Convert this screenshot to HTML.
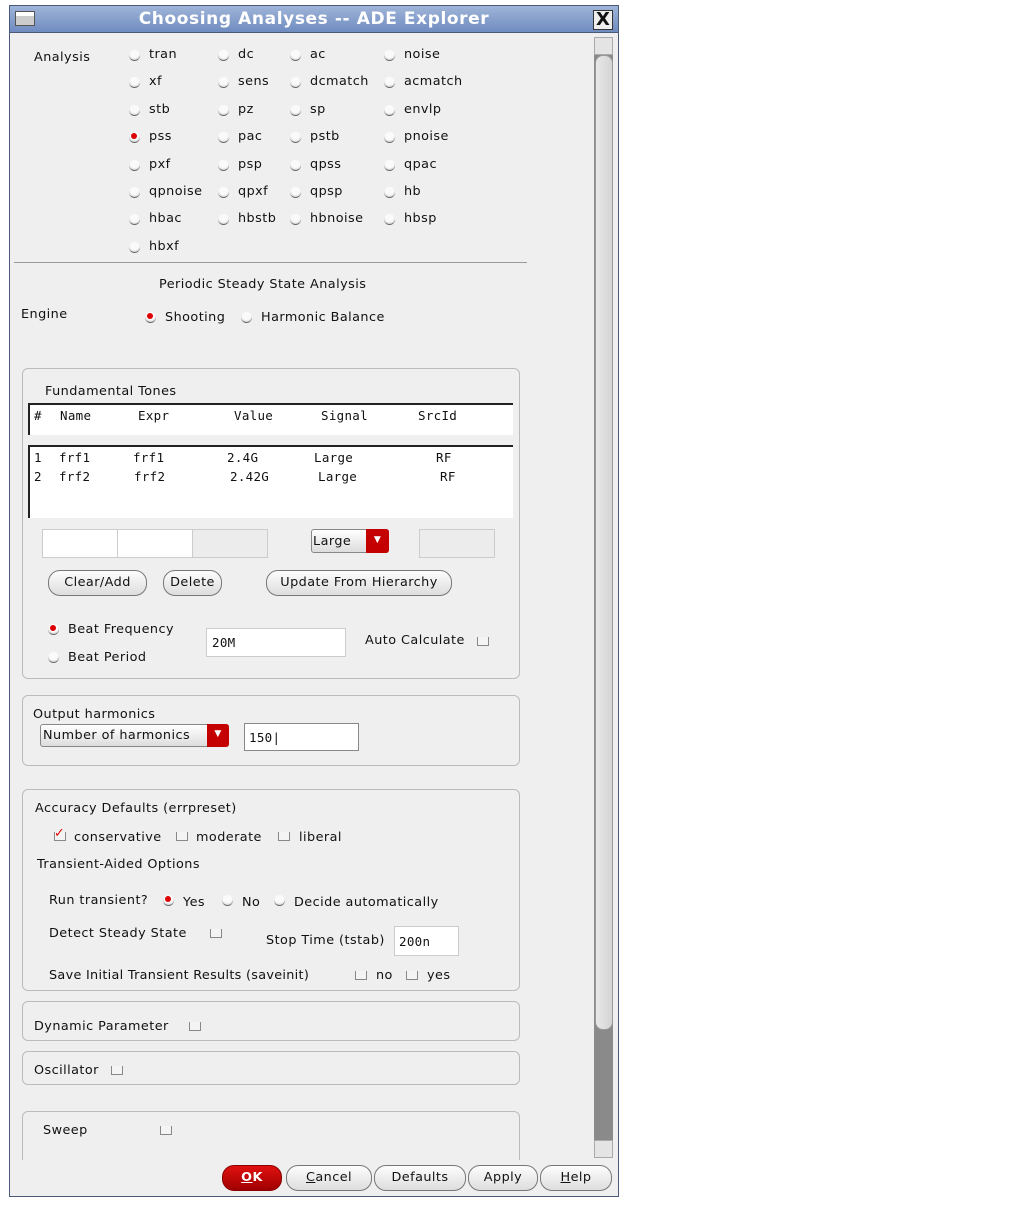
<!DOCTYPE html>
<html><head><meta charset="utf-8"><style>
*{box-sizing:border-box;margin:0;padding:0}
body{width:1013px;height:1213px;background:#fff;position:relative;overflow:hidden;font-family:"DejaVu Sans","Liberation Sans",sans-serif;font-size:12.8px;letter-spacing:0.45px;color:#111}
.a{position:absolute;white-space:nowrap;line-height:16px}
.m{font-family:"DejaVu Sans Mono","Liberation Mono",monospace;font-size:12.5px;letter-spacing:0.3px}
.win{position:absolute;left:9px;top:5px;width:610px;height:1192px;border:1px solid #4a5a78;background:#efefef}
.title{position:absolute;left:9px;top:5px;width:610px;height:28px;background:linear-gradient(#9fb4d8,#6f8cc0);border:1px solid #4a5a78}
.r{position:absolute;width:11px;height:11px;border-radius:50%;background:radial-gradient(circle at 50% 35%,#fafafa 50%,#ddd 70%);border-bottom:1.5px solid #666}
.r.on::after{content:"";position:absolute;left:2px;top:1px;width:6px;height:6px;border-radius:50%;background:#d00}
.c{position:absolute;width:12px;height:9px;border:1.5px solid #888;border-top:none;background:#f4f4f4}
.g{position:absolute;border:1px solid #bbb;border-radius:6px}
.in{position:absolute;background:#fff;border:1px solid #aaa;border-top-color:#888}
.b{position:absolute;height:26px;border:1px solid #777;border-radius:12px;background:linear-gradient(#fdfdfd,#ddd);text-align:center;line-height:24px}
</style></head><body>
<div class="win"></div>
<div class="title"></div>
<div style="position:absolute;left:15px;top:11px;width:20px;height:15px;border:1px solid #555;background:linear-gradient(#fff 0 30%,#ccc 30%)"></div>
<div class="a" style="left:9px;width:610px;top:10px;text-align:center;color:#fff;font-weight:bold;font-size:17px;line-height:18px;letter-spacing:0.6px">Choosing Analyses -- ADE Explorer</div>
<div style="position:absolute;left:593px;top:10px;width:20px;height:20px;border:1px solid #333;background:#eee;font:bold 18px/18px 'DejaVu Sans';text-align:center;letter-spacing:0">X</div>
<div style="position:absolute;left:594px;top:37px;width:19px;height:1121px;background:#8a8a8a"></div>
<div style="position:absolute;left:594px;top:37px;width:19px;height:18px;background:#e4e4e4;border:1px solid #aaa"></div>
<div style="position:absolute;left:595px;top:55px;width:18px;height:975px;background:linear-gradient(90deg,#e8e8e8,#d4d4d4);border:1px solid #999;border-radius:8px"></div>
<div style="position:absolute;left:594px;top:1140px;width:19px;height:18px;background:#e4e4e4;border:1px solid #aaa"></div>
<div style="position:absolute;left:14px;top:262px;width:513px;height:1px;background:#999"></div>

<div class="a" style="left:34px;top:50px">Analysis</div>
<div class="r" style="left:129px;top:50px"></div><div class="a" style="left:149px;top:47px">tran</div>
<div class="r" style="left:218px;top:50px"></div><div class="a" style="left:238px;top:47px">dc</div>
<div class="r" style="left:290px;top:50px"></div><div class="a" style="left:310px;top:47px">ac</div>
<div class="r" style="left:384px;top:50px"></div><div class="a" style="left:404px;top:47px">noise</div>
<div class="r" style="left:129px;top:77px"></div><div class="a" style="left:149px;top:74px">xf</div>
<div class="r" style="left:218px;top:77px"></div><div class="a" style="left:238px;top:74px">sens</div>
<div class="r" style="left:290px;top:77px"></div><div class="a" style="left:310px;top:74px">dcmatch</div>
<div class="r" style="left:384px;top:77px"></div><div class="a" style="left:404px;top:74px">acmatch</div>
<div class="r" style="left:129px;top:105px"></div><div class="a" style="left:149px;top:102px">stb</div>
<div class="r" style="left:218px;top:105px"></div><div class="a" style="left:238px;top:102px">pz</div>
<div class="r" style="left:290px;top:105px"></div><div class="a" style="left:310px;top:102px">sp</div>
<div class="r" style="left:384px;top:105px"></div><div class="a" style="left:404px;top:102px">envlp</div>
<div class="r on" style="left:129px;top:132px"></div><div class="a" style="left:149px;top:129px">pss</div>
<div class="r" style="left:218px;top:132px"></div><div class="a" style="left:238px;top:129px">pac</div>
<div class="r" style="left:290px;top:132px"></div><div class="a" style="left:310px;top:129px">pstb</div>
<div class="r" style="left:384px;top:132px"></div><div class="a" style="left:404px;top:129px">pnoise</div>
<div class="r" style="left:129px;top:160px"></div><div class="a" style="left:149px;top:157px">pxf</div>
<div class="r" style="left:218px;top:160px"></div><div class="a" style="left:238px;top:157px">psp</div>
<div class="r" style="left:290px;top:160px"></div><div class="a" style="left:310px;top:157px">qpss</div>
<div class="r" style="left:384px;top:160px"></div><div class="a" style="left:404px;top:157px">qpac</div>
<div class="r" style="left:129px;top:187px"></div><div class="a" style="left:149px;top:184px">qpnoise</div>
<div class="r" style="left:218px;top:187px"></div><div class="a" style="left:238px;top:184px">qpxf</div>
<div class="r" style="left:290px;top:187px"></div><div class="a" style="left:310px;top:184px">qpsp</div>
<div class="r" style="left:384px;top:187px"></div><div class="a" style="left:404px;top:184px">hb</div>
<div class="r" style="left:129px;top:214px"></div><div class="a" style="left:149px;top:211px">hbac</div>
<div class="r" style="left:218px;top:214px"></div><div class="a" style="left:238px;top:211px">hbstb</div>
<div class="r" style="left:290px;top:214px"></div><div class="a" style="left:310px;top:211px">hbnoise</div>
<div class="r" style="left:384px;top:214px"></div><div class="a" style="left:404px;top:211px">hbsp</div>
<div class="r" style="left:129px;top:242px"></div><div class="a" style="left:149px;top:239px">hbxf</div>

<div class="a" style="left:159px;top:277px">Periodic Steady State Analysis</div>
<div class="a" style="left:21px;top:307px">Engine</div>
<div class="r on" style="left:145px;top:312px"></div><div class="a" style="left:165px;top:310px">Shooting</div>
<div class="r" style="left:241px;top:312px"></div><div class="a" style="left:261px;top:310px">Harmonic Balance</div>

<div class="g" style="left:22px;top:368px;width:498px;height:311px"></div>
<div class="a" style="left:45px;top:384px">Fundamental Tones</div>
<div style="position:absolute;left:28px;top:403px;width:485px;height:32px;background:#fff;border-top:2px solid #222;border-left:2px solid #222"></div>
<div class="a m" style="left:34px;top:408px">#</div><div class="a m" style="left:60px;top:408px">Name</div><div class="a m" style="left:138px;top:408px">Expr</div><div class="a m" style="left:234px;top:408px">Value</div><div class="a m" style="left:321px;top:408px">Signal</div><div class="a m" style="left:418px;top:408px">SrcId</div>
<div style="position:absolute;left:28px;top:445px;width:485px;height:73px;background:#fff;border-top:2px solid #222;border-left:2px solid #222"></div>
<div class="a m" style="left:34px;top:450px">1</div><div class="a m" style="left:59px;top:450px">frf1</div><div class="a m" style="left:133px;top:450px">frf1</div><div class="a m" style="left:227px;top:450px">2.4G</div><div class="a m" style="left:314px;top:450px">Large</div><div class="a m" style="left:436px;top:450px">RF</div>
<div class="a m" style="left:34px;top:469px">2</div><div class="a m" style="left:59px;top:469px">frf2</div><div class="a m" style="left:134px;top:469px">frf2</div><div class="a m" style="left:230px;top:469px">2.42G</div><div class="a m" style="left:318px;top:469px">Large</div><div class="a m" style="left:440px;top:469px">RF</div>
<div class="in" style="left:42px;top:529px;width:76px;height:29px;border-color:#ccc"></div>
<div class="in" style="left:117px;top:529px;width:76px;height:29px;border-color:#ccc"></div>
<div class="in" style="left:192px;top:529px;width:76px;height:29px;background:#ececec;border-color:#ccc"></div>
<div style="position:absolute;left:311px;top:529px;width:78px;height:24px;border:1px solid #888;border-radius:3px;background:linear-gradient(#fff,#ddd)"></div>
<div class="a" style="left:313px;top:534px">Large</div>
<div style="position:absolute;left:366px;top:529px;width:23px;height:24px;background:#c40000;border-radius:0 3px 3px 0;color:#fff;font-size:9px;text-align:center;line-height:22px">▼</div>
<div class="in" style="left:419px;top:529px;width:76px;height:29px;background:#ececec;border-color:#ccc"></div>
<div class="b" style="left:48px;top:570px;width:99px">Clear/Add</div>
<div class="b" style="left:163px;top:570px;width:59px">Delete</div>
<div class="b" style="left:266px;top:570px;width:186px">Update From Hierarchy</div>
<div class="r on" style="left:48px;top:624px"></div><div class="a" style="left:68px;top:622px">Beat Frequency</div>
<div class="r" style="left:48px;top:652px"></div><div class="a" style="left:68px;top:650px">Beat Period</div>
<div class="in" style="left:206px;top:628px;width:140px;height:29px;border-color:#ccc"></div>
<div class="a m" style="left:212px;top:635px">20M</div>
<div class="a" style="left:365px;top:633px">Auto Calculate</div>
<div class="c" style="left:477px;top:637px"></div>

<div class="g" style="left:22px;top:695px;width:498px;height:71px"></div>
<div class="a" style="left:33px;top:707px">Output harmonics</div>
<div style="position:absolute;left:40px;top:724px;width:189px;height:23px;border:1px solid #888;border-radius:3px;background:linear-gradient(#fff,#ddd)"></div>
<div class="a" style="left:43px;top:728px">Number of harmonics</div>
<div style="position:absolute;left:207px;top:724px;width:22px;height:23px;background:#c40000;border-radius:0 3px 3px 0;color:#fff;font-size:9px;text-align:center;line-height:21px">▼</div>
<div class="in" style="left:244px;top:723px;width:115px;height:28px;border-color:#888"></div>
<div class="a m" style="left:249px;top:730px">150|</div>

<div class="g" style="left:22px;top:789px;width:498px;height:202px"></div>
<div class="a" style="left:35px;top:801px">Accuracy Defaults (errpreset)</div>
<div class="c" style="left:54px;top:832px"></div><div class="a" style="left:54px;top:826px;color:#d00;font-weight:bold">✓</div><div class="a" style="left:74px;top:830px">conservative</div>
<div class="c" style="left:176px;top:832px"></div><div class="a" style="left:196px;top:830px">moderate</div>
<div class="c" style="left:278px;top:832px"></div><div class="a" style="left:299px;top:830px">liberal</div>
<div class="a" style="left:37px;top:857px">Transient-Aided Options</div>
<div class="a" style="left:49px;top:893px">Run transient?</div>
<div class="r on" style="left:163px;top:895px"></div><div class="a" style="left:183px;top:895px">Yes</div>
<div class="r" style="left:222px;top:895px"></div><div class="a" style="left:242px;top:895px">No</div>
<div class="r" style="left:274px;top:895px"></div><div class="a" style="left:294px;top:895px">Decide automatically</div>
<div class="a" style="left:49px;top:926px">Detect Steady State</div>
<div class="c" style="left:210px;top:929px"></div>
<div class="a" style="left:266px;top:933px">Stop Time (tstab)</div>
<div class="in" style="left:394px;top:926px;width:65px;height:30px;border-color:#ccc"></div>
<div class="a m" style="left:399px;top:934px">200n</div>
<div class="a" style="left:49px;top:968px;letter-spacing:0.3px">Save Initial Transient Results (saveinit)</div>
<div class="c" style="left:355px;top:971px"></div><div class="a" style="left:376px;top:968px">no</div>
<div class="c" style="left:406px;top:971px"></div><div class="a" style="left:427px;top:968px">yes</div>

<div class="g" style="left:22px;top:1001px;width:498px;height:40px"></div>
<div class="a" style="left:34px;top:1019px">Dynamic Parameter</div><div class="c" style="left:189px;top:1022px"></div>
<div class="g" style="left:22px;top:1051px;width:498px;height:34px"></div>
<div class="a" style="left:34px;top:1063px">Oscillator</div><div class="c" style="left:111px;top:1066px"></div>
<div class="g" style="left:22px;top:1111px;width:498px;height:60px;border-bottom:none;border-radius:6px 6px 0 0"></div>
<div class="a" style="left:43px;top:1123px">Sweep</div><div class="c" style="left:160px;top:1126px"></div>
<div style="position:absolute;left:12px;top:1160px;width:580px;height:36px;background:#efefef"></div>

<div class="b" style="left:222px;top:1165px;width:60px;height:26px;background:linear-gradient(#e01010,#a00000);color:#fff;font-weight:bold;border-color:#800"><u>O</u>K</div>
<div class="b" style="left:286px;top:1165px;width:86px"><u>C</u>ancel</div>
<div class="b" style="left:374px;top:1165px;width:92px">Defaults</div>
<div class="b" style="left:468px;top:1165px;width:70px">Apply</div>
<div class="b" style="left:540px;top:1165px;width:72px"><u>H</u>elp</div>
</body></html>
